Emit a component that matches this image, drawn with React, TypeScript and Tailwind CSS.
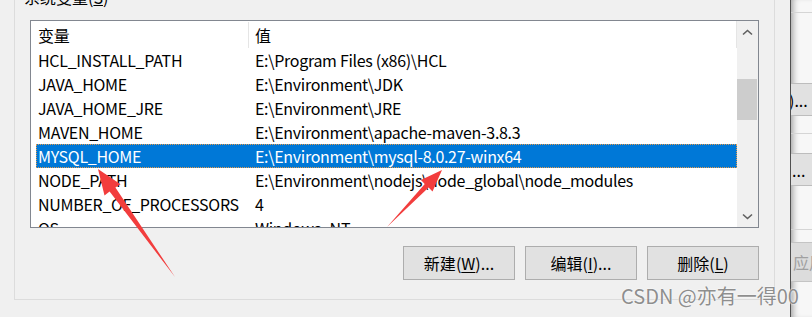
const rows = [
  { name: "HCL_INSTALL_PATH", value: "E:\\Program Files (x86)\\HCL" },
  { name: "JAVA_HOME", value: "E:\\Environment\\JDK" },
  { name: "JAVA_HOME_JRE", value: "E:\\Environment\\JRE" },
  { name: "MAVEN_HOME", value: "E:\\Environment\\apache-maven-3.8.3" },
  { name: "MYSQL_HOME", value: "E:\\Environment\\mysql-8.0.27-winx64", selected: true },
  { name: "NODE_PATH", value: "E:\\Environment\\nodejs\\node_global\\node_modules" },
  { name: "NUMBER_OF_PROCESSORS", value: "4" },
  { name: "OS", value: "Windows_NT" },
];

function Chevron({ down }: { down?: boolean }) {
  return (
    <svg width="11" height="7" viewBox="0 0 11 7">
      <path
        d={down ? "M1 1.5 L5.5 5.5 L10 1.5" : "M1 5.5 L5.5 1.5 L10 5.5"}
        fill="none"
        stroke="#606060"
        strokeWidth="1.6"
      />
    </svg>
  );
}

function Btn({ label, mnemonic, tail }: { label: string; mnemonic: string; tail: string }) {
  return (
    <button className="flex h-[34px] w-[112px] items-center justify-center border border-[#adadad] bg-[#e1e1e1] text-[16px] leading-none">
      {label}(<span className="underline underline-offset-2">{mnemonic}</span>){tail}
    </button>
  );
}

export default function App() {
  return (
    <div className="relative flex h-[317px] w-[812px] overflow-hidden bg-[#f0f0f0] font-['Noto_Sans_CJK_SC',sans-serif] text-[16px] text-black">
      <div className="w-[790px] shrink-0 pl-[14px] pr-[15px]">
        <div className="relative -mt-[10px] h-[310px] border border-[#dcdcdc] px-[15px] pt-[29px]">
          <div className="absolute -top-[4px] left-[8px] bg-[#f0f0f0] px-[1px] leading-[20px]">系统变量(<span className="underline">S</span>)</div>

          <div className="flex h-[208px] w-[729px] border border-[#828790] bg-white">
            <div className="w-[706px] overflow-hidden tracking-[-0.3px]">
              <div className="flex h-[27px] items-center border-r border-[#e5e5e5]">
                <div className="flex h-[26px] w-[218px] items-center border-r border-[#e5e5e5] pl-[7px]">变量</div>
                <div className="pl-[6px]">值</div>
              </div>
              {rows.map((r) =>
                r.selected ? (
                  <div
                    key={r.name}
                    className="ml-[5px] flex h-[24px] items-center border border-dotted border-[#e39a4c] bg-[#0078d7] text-white"
                  >
                    <div className="w-[218px] pl-[1px]">{r.name}</div>
                    <div>{r.value}</div>
                  </div>
                ) : (
                  <div key={r.name} className="ml-[5px] flex h-[24px] items-center">
                    <div className="w-[219px] pl-[2px]">{r.name}</div>
                    <div>{r.value}</div>
                  </div>
                )
              )}
            </div>
            <div className="flex w-[21px] flex-col bg-[#f0f0f0]">
              <div className="flex h-[22px] items-center justify-center">
                <Chevron />
              </div>
              <div className="h-[36px]" />
              <div className="h-[41px] w-[20px] bg-[#cdcdcd]" />
              <div className="flex-1" />
              <div className="flex h-[22px] items-center justify-center">
                <Chevron down />
              </div>
            </div>
          </div>

          <div className="mt-[18px] flex w-[729px] justify-end gap-[10px]">
            <Btn label="新建" mnemonic="W" tail="..." />
            <Btn label="编辑" mnemonic="I" tail="..." />
            <Btn label="删除" mnemonic="L" tail="" />
          </div>
        </div>
      </div>

      <div className="w-[22px] shrink-0 overflow-hidden border-l border-[#505050] bg-[#f7f7f7] shadow-[inset_6px_0_6px_-4px_rgba(0,0,0,0.35)]">
        <div className="mt-[12px] h-px bg-[#d5d5d5]" />
        <div className="mt-[70px] flex h-[33px] items-center border-y border-[#bdbdbd] bg-[#e1e1e1] text-[16px] leading-none">
          <span className="-ml-[2px]">)...</span>
        </div>
        <div className="mt-[17px] h-px bg-[#d5d5d5]" />
        <div className="mt-[19px] flex h-[33px] items-center border-y border-[#bdbdbd] bg-[#e1e1e1] text-[16px] leading-none">
          <span className="ml-[1px]">...</span>
        </div>
        <div className="mt-[43px] h-px bg-[#d5d5d5]" />
        <div className="mt-[12px] flex h-[40px] items-center border-y border-[#c4c4c4] bg-[#dcdcdc] text-[16px] leading-none text-[#a0a0a0]">
          <span className="ml-[2px] whitespace-nowrap">应用</span>
        </div>
      </div>

      <div className="pointer-events-none absolute left-[621px] top-[283px] whitespace-nowrap text-[20px] leading-[26px] text-[#8e8e8e] [text-shadow:0_0_2px_#fff,0_0_1px_#fff]">
        CSDN @亦有一得00
      </div>

      <svg className="pointer-events-none absolute left-0 top-0" width="812" height="317" viewBox="0 0 812 317">
        <polygon
          points="98,169 120.5,184.2 115.4,187.5 175,277 109.6,191.6 104.5,195.5"
          fill="#f23d3d"
        />
        <polygon
          points="442,170 432.5,191.5 428.6,187.6 387,227 424.8,183.9 420.9,180.1"
          fill="#f23d3d"
        />
      </svg>
    </div>
  );
}
